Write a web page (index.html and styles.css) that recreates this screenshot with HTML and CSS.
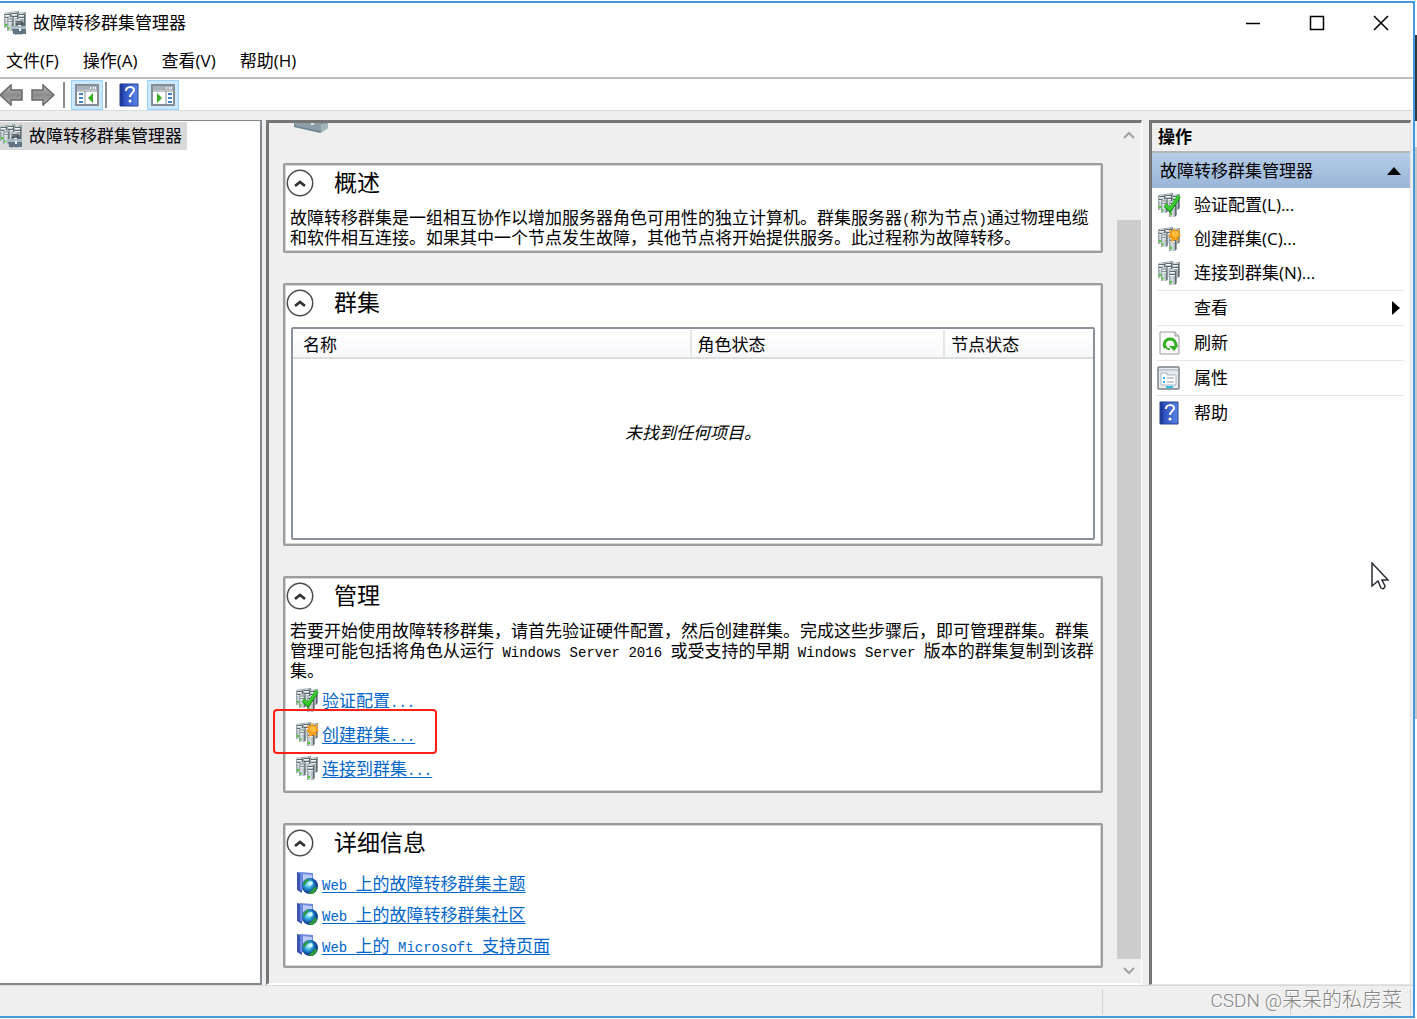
FILE: index.html
```html
<!DOCTYPE html>
<html lang="zh-CN">
<head>
<meta charset="utf-8">
<title>故障转移群集管理器</title>
<link rel="stylesheet" href="styles.css">
</head>
<body>
<svg class="defs" aria-hidden="true">
  <defs>
    <linearGradient id="steel"><stop offset="0" stop-color="#8a979d"/><stop offset=".35" stop-color="#dbe2e5"/><stop offset="1" stop-color="#87949a"/></linearGradient>
    <linearGradient id="book"><stop offset="0" stop-color="#1c3a9c"/><stop offset=".2" stop-color="#2c50c0"/><stop offset="1" stop-color="#5b84e6"/></linearGradient>
    <linearGradient id="metal" x2="0" y2="1"><stop offset="0" stop-color="#bdbdbd"/><stop offset=".5" stop-color="#8a8a8a"/><stop offset="1" stop-color="#b5b5b5"/></linearGradient>
    <radialGradient id="earth" cx=".4" cy=".4"><stop offset="0" stop-color="#b8f4ff"/><stop offset=".5" stop-color="#2aa2d8"/><stop offset="1" stop-color="#0c3d94"/></radialGradient>
  </defs>
  <symbol id="tower" viewBox="0 0 8 16">
    <path d="M0 2 2 0h6v14l-2 2H0z" fill="url(#steel)"/>
    <path d="M6.500 2v13" stroke="#5d696f" fill="none"/>
    <path d="M1 2.500h5M1 5.500h5" stroke="#59666c" fill="none"/>
    <path d="M1 3.500h5M1 6.500h5" stroke="#f4f7f8" fill="none"/>
    <path d="M1 12h2v2H1z" fill="#45cc25"/>
  </symbol>
  <symbol id="servers" viewBox="0 0 24 24">
    <use href="#tower" x="1" y="1" width="8" height="16"/>
    <use href="#tower" x="8" y="0" width="8" height="16"/>
    <use href="#tower" x="15" y="1" width="8" height="16"/>
    <use href="#tower" x="4" y="6" width="7" height="14"/>
    <use href="#tower" x="12" y="8" width="8" height="16"/>
  </symbol>
  <symbol id="verify" viewBox="0 0 24 24">
    <use href="#servers"/><path d="m8 12 5 5L22 3" fill="none" stroke="#168817" stroke-width="4"/><path d="m8 12 5 4L22 3" fill="none" stroke="#3acb2c" stroke-width="3"/>
  </symbol>
  <symbol id="create" viewBox="0 0 24 24">
    <use href="#servers"/><path d="m12 3 3 1 2-3 2 3 4-2-1 4 2 3-3 1 1 4-4-1-4 2v-4l-3-2 2-2z" fill="#f5a01c"/><circle cx="18" cy="7" r="3" fill="#ffbe3b"/>
  </symbol>
  <symbol id="manager" viewBox="0 0 24 24">
    <use href="#servers"/><path d="M14 15v-3h6v3" fill="none" stroke="#46535a" stroke-width="1.500"/><path d="M9 15h14v8H10z" fill="#607580"/><path d="M9 15h14v3H9z" fill="#a9bbc3"/><path d="M16 17h2v3h-2z" fill="#eef3f5"/>
  </symbol>
  <symbol id="help" viewBox="0 0 20 24">
    <path d="M1 1h18v22H1z" fill="url(#book)" stroke="#243f91"/><path d="M3 1v22" stroke="#17307e"/>
    <path d="M7 8c0-5 8-5 8-1 0 3-4 3-4 7" fill="none" stroke="#fff" stroke-width="2"/><circle cx="11" cy="18" r="1.5" fill="#fff"/>
  </symbol>
  <symbol id="web" viewBox="0 0 24 24">
    <path d="m2 1 5 1v20l-5-3z" fill="#3a55b4"/><path d="m5 1 13 1v18L5 19z" fill="#6d88dc"/><path d="m8 3 9 1v6H8z" fill="#b9caf6"/>
    <circle cx="15" cy="15" r="8" fill="url(#earth)"/><path d="m8 12 4-4 2 1-3 3-2 3zM16 20l5-5 1 3-4 5-5-1z" fill="#2d9b32"/><path d="m13 11 4-1 1 3-3 2z" fill="#d2fbff"/>
  </symbol>
  <symbol id="console" viewBox="0 0 24 22">
    <path d="M1 1h22v20H1z" fill="#fff" stroke="#858d96" stroke-width="2"/><path d="M2 2h20v4H2z" fill="#a9b2bb"/><path d="M2 7h20" stroke="#858d96" stroke-width="1"/><path d="M15 4h1m2 0h1m1 0h1" stroke="#fff" stroke-width="2"/>
  </symbol>
  <symbol id="collapse" viewBox="0 0 28 28">
    <circle cx="14" cy="14" r="12.7" fill="#fff" stroke="#4c4c4c" stroke-width="1.5"/><path d="m9 17 5-4 5 4" fill="none" stroke="#333" stroke-width="2.8"/>
  </symbol>
</svg>

<div class="desktop">
  <div class="window">
    <header class="titlebar">
      <svg class="icon"><use href="#manager"/></svg>
      <h1>故障转移群集管理器</h1>
      <div class="caption">
        <button aria-label="最小化"><svg viewBox="0 0 16 16"><path d="M1 8.500h14"/></svg></button>
        <button aria-label="最大化"><svg viewBox="0 0 16 16"><path d="M1.500 1.500h13v13h-13z"/></svg></button>
        <button aria-label="关闭"><svg viewBox="0 0 16 16"><path d="m1 1 14 14M15 1 1 15"/></svg></button>
      </div>
    </header>
    <nav class="menubar">
      <button>文件(F)</button><button>操作(A)</button><button>查看(V)</button><button>帮助(H)</button>
    </nav>
    <div class="toolbar">
      <button class="tool arrow" aria-label="后退"><svg viewBox="0 0 24 22"><path d="M1 11 12 1v5h11v10H12v5z" fill="url(#metal)" stroke="#686868" stroke-width="1.500"/></svg></button>
      <button class="tool arrow" aria-label="前进"><svg viewBox="0 0 24 22"><path d="M23 11 12 1v5H1v10h11v5z" fill="url(#metal)" stroke="#686868" stroke-width="1.500"/></svg></button>
      <span class="divider"></span>
      <button class="tool pressed" aria-label="显示控制台树"><svg viewBox="0 0 24 22"><use href="#console"/><path d="M10 7v14" stroke="#858d96"/><path d="M4 10h4M4 14h4M4 18h4" stroke="#4382c4" stroke-width="2"/><path d="m18 9-5 5 5 5z" fill="#35ad22"/></svg></button>
      <span class="divider"></span>
      <button class="tool" aria-label="帮助"><svg class="book"><use href="#help"/></svg></button>
      <button class="tool pressed" aria-label="显示操作窗格"><svg viewBox="0 0 24 22"><use href="#console"/><path d="M15 7v14" stroke="#858d96"/><path d="M17 10h4M17 14h4M17 18h4" stroke="#4382c4" stroke-width="2"/><path d="m6 9 5 5-5 5z" fill="#35ad22"/></svg></button>
    </div>

    <div class="panes">
      <aside class="tree">
        <button class="node"><svg class="icon"><use href="#manager"/></svg>故障转移群集管理器</button>
      </aside>

      <main class="centre">
        <div class="content">
          <svg class="banner" viewBox="0 0 34 10"><path d="M0 0h34v5l-8 5L0 4z" fill="#708690"/><path d="M0 0h27v8L2 3z" fill="#8d9ea6"/><path d="m27 1 7-1v5l-7 5z" fill="#a5b5bc"/><path d="M17 0h3v2h-3z" fill="#dce4e8"/></svg>

          <section class="card">
            <div class="head"><button aria-label="折叠"><svg><use href="#collapse"/></svg></button><h2>概述</h2></div>
            <p>故障转移群集是一组相互协作以增加服务器角色可用性的独立计算机。群集服务器<span class="half">(</span>称为节点<span class="half">)</span>通过物理电缆和软件相互连接。如果其中一个节点发生故障，其他节点将开始提供服务。此过程称为故障转移。</p>
          </section>

          <section class="card">
            <div class="head"><button aria-label="折叠"><svg><use href="#collapse"/></svg></button><h2>群集</h2></div>
            <div class="list">
              <table>
                <thead><tr><th class="name">名称</th><th class="role">角色状态</th><th>节点状态</th></tr></thead>
                <tbody><tr><td colspan="3">未找到任何项目。</td></tr></tbody>
              </table>
            </div>
          </section>

          <section class="card">
            <div class="head"><button aria-label="折叠"><svg><use href="#collapse"/></svg></button><h2>管理</h2></div>
            <p>若要开始使用故障转移群集，请首先验证硬件配置，然后创建群集。完成这些步骤后，即可管理群集。群集管理可能包括将角色从运行<span class="half"> Windows Server 2016 </span>或受支持的早期<span class="half"> Windows Server </span>版本的群集复制到该群集。</p>
            <ul class="links tasks">
              <li><svg class="icon"><use href="#verify"/></svg><a href="#verify">验证配置<span class="half">...</span></a></li>
              <li class="marked"><svg class="icon"><use href="#create"/></svg><a href="#create">创建群集<span class="half">...</span></a></li>
              <li><svg class="icon"><use href="#servers"/></svg><a href="#servers">连接到群集<span class="half">...</span></a></li>
            </ul>
          </section>

          <section class="card">
            <div class="head"><button aria-label="折叠"><svg><use href="#collapse"/></svg></button><h2>详细信息</h2></div>
            <ul class="links">
              <li><svg class="icon"><use href="#web"/></svg><a href="#web"><span class="half">Web </span>上的故障转移群集主题</a></li>
              <li><svg class="icon"><use href="#web"/></svg><a href="#web"><span class="half">Web </span>上的故障转移群集社区</a></li>
              <li><svg class="icon"><use href="#web"/></svg><a href="#web"><span class="half">Web </span>上的<span class="half"> Microsoft </span>支持页面</a></li>
            </ul>
          </section>
        </div>
        <div class="scrollbar">
          <button aria-label="向上滚动"><svg viewBox="0 0 12 8"><path d="m1 7 5-5 5 5"/></svg></button>
          <div class="track"><div class="thumb"></div></div>
          <button aria-label="向下滚动"><svg viewBox="0 0 12 8"><path d="m1 1 5 5 5-5"/></svg></button>
        </div>
      </main>

      <aside class="actions">
        <h2>操作</h2>
        <button class="group">故障转移群集管理器<svg viewBox="0 0 14 8"><path d="M0 8 7 0l7 8z"/></svg></button>
        <ul>
          <li><button><svg class="icon"><use href="#verify"/></svg>验证配置(L)...</button></li>
          <li><button><svg class="icon"><use href="#create"/></svg>创建群集(C)...</button></li>
          <li><button><svg class="icon"><use href="#servers"/></svg>连接到群集(N)...</button></li>
          <li class="ruled"><button><span class="icon"></span>查看<svg class="more" viewBox="0 0 8 14"><path d="m0 0 8 7-8 7z"/></svg></button></li>
          <li class="ruled"><button><svg class="icon" viewBox="0 0 24 24"><path d="M3 1h15l4 4v18H3z" fill="#fafafa" stroke="#999"/><path d="M18 1v4h4" fill="#ddd" stroke="#999"/><path d="M8 17c-4-9 9-13 11-4v3" fill="none" stroke="#36ad25" stroke-width="3"/><path d="M12 15h9l-4 5z" fill="#36ad25"/><path d="M8 14c1 4 3 4 5 4" fill="none" stroke="#36ad25" stroke-width="2"/></svg>刷新</button></li>
          <li class="ruled"><button><svg class="icon" viewBox="0 0 24 24"><rect x="1" y="1" width="21" height="22" rx="1" fill="#e8ebed" stroke="#7b8288" stroke-width="1.500"/><path d="M2 4h19" stroke="#a9afb4"/><path d="M4 7h6v2h9v10H4z" fill="#fff" stroke="#a9b5c3"/><path d="M6 12h2M6 16h2" stroke="#23b6df" stroke-width="2"/><path d="M10 12h7M10 16h7" stroke="#8e9ba9"/><path d="M9 20h7v2H9z" fill="#32c0e6"/></svg>属性</button></li>
          <li class="ruled"><button><svg class="icon"><use href="#help"/></svg>帮助</button></li>
        </ul>
      </aside>
    </div>

    <footer class="statusbar"><span class="cell wide"></span><span class="cell middle"></span><span class="cell small"></span></footer>
  </div>
  <div class="backdrop"></div>
  <svg class="cursor" viewBox="0 0 18 28"><path d="M1 1v23l6-5 3 7q3 2 4-2l-3-6h6z" fill="#fff" stroke="#2b2b35" stroke-width="1.500"/></svg>
  <div class="watermark"><span>CSDN @</span>呆呆的私房菜</div>
</div>
</body>
</html>
```
FILE: styles.css
```css
*, *::after { box-sizing: border-box; }
body {
  margin: 0;
  background: #fff;
  color: #000;
  font: 17px/20px "Open Sans", "Noto Sans CJK SC", sans-serif;
}
button { border: 0; padding: 0; background: none; color: inherit; font: inherit; }
h1, h2, p, ul { margin: 0; padding: 0; font-weight: 400; }
h1 { font-size: 17px; }
ul { list-style: none; }
svg { display: block; flex: none; }
.defs { position: absolute; width: 0; height: 0; }
.icon { width: 24px; height: 24px; flex: none; }

.desktop {
  position: relative;
  display: grid;
  grid-template-columns: 1fr 2px;
  min-height: 100vh;
  padding: 1px 0 1px;
}
.window {
  display: flex;
  flex-direction: column;
  min-width: 0;
  border: 2px solid #4499dc;
  border-left: 0;
  background: #efefef;
}
.backdrop {
  background: linear-gradient(#fff 34px, #303840 34px, #303840 120px, #eee 120px, #eee 146px, #c6c6c6 146px, #c6c6c6 718px, #fff 718px);
}

.titlebar { display: flex; align-items: center; height: 40px; padding-left: 3px; gap: 6px; background: #fff; }
.caption { display: flex; margin-left: auto; }
.caption button { display: flex; justify-content: center; width: 64px; padding: 12px 0; }
.caption svg { width: 16px; height: 16px; fill: none; stroke: #000; stroke-width: 1.5; }
.menubar { display: flex; gap: 24px; height: 36px; padding: 2px 6px 0; background: #fff; border-bottom: 2px solid #b9bcbc; }
.toolbar { display: flex; align-items: center; height: 32px; padding-top: 1px; background: #fff; border-bottom: 1px solid #d9d9d9; }
.tool { display: flex; align-items: center; justify-content: center; width: 32px; height: 30px; }
.tool svg { width: 24px; height: 22px; }
.tool svg.book { width: 20px; height: 24px; }
.tool.arrow { justify-content: flex-start; }
.arrow:first-child { width: 32px; margin-left: -1px; }
.pressed { background: #cce8ff; border: 1px solid #99d1ff; }
.divider { width: 2px; height: 26px; margin: 0 6px 0 2px; background: #8c8c8c; }
.arrow + .divider { margin-left: 0; }
.divider + .tool:not(.pressed) { margin: 0 2px 0 0; }

.panes { flex: 1; display: grid; grid-template-columns: 262px minmax(0, 1fr) 262px; padding: 9px 2px 0 0; }
.tree { background: #fff; border: solid #828790; border-width: 1px 2px 2px 0; padding-top: 1px; }
.node { display: flex; align-items: center; gap: 6px; height: 28px; padding-right: 5px; background: #d9d9d9; }
.node .icon { margin-left: -1px; }
.centre {
  display: flex;
  margin: 0 7px 0 4px;
  border: solid #767676;
  border-width: 3px 1px 2px 3px;
  border-right-color: #fff;
  border-bottom-color: #fff;
  font-family: "Noto Sans CJK SC", sans-serif;
}
.content { flex: 1; display: flex; flex-direction: column; gap: 30px; min-width: 0; padding: 0 14px; }
.banner { width: 34px; height: 10px; margin-left: 11px; }
.card { padding: 0 5px 4px; background: #fff; border: 2px solid #9c9c9c; border-radius: 2px; box-shadow: inset 0 0 0 1px #d5d5d5; }
.head { display: flex; align-items: center; gap: 20px; height: 36px; margin: 0 0 6px -4px; }
.head svg { width: 28px; height: 28px; }
.head h2 { padding-bottom: 4px; font-size: 23px; line-height: 32px; }
.half { font-family: "Liberation Mono", monospace; font-size: 14px; line-height: 12px; }
.list { height: 213px; margin: 0 1px; padding: 1px 0 0; border: 2px solid #8b919b; border-radius: 2px; }
table { width: 100%; height: 100%; border-collapse: collapse; table-layout: fixed; }
th { height: 28px; padding: 0 0 0 6px; border-bottom: 2px solid #dcdddd; border-right: 2px solid #e4e5e5; text-align: left; font-weight: 400; background: linear-gradient(#fff, #f7f8fa); }
th:last-child { border-right: 0; }
.name { width: 49.7%; padding-left: 10px; }
.role { width: 31.7%; }
td { padding: 0 0 34px; text-align: center; font-style: italic; }
.links { padding-bottom: 2px; }
.links li { display: flex; align-items: center; gap: 3px; height: 31px; padding-left: 5px; }
.tasks { padding-top: 3px; }
.tasks li { height: 34px; }
.links a { color: #0066cc; text-underline-offset: 2px; }
.marked { position: relative; }
.marked::after { content: ""; position: absolute; left: -17px; top: -8px; width: 164px; height: 45px; border: 2px solid #ff2015; border-radius: 4px; }

.scrollbar { display: flex; flex-direction: column; width: 24px; }
.scrollbar button { display: flex; align-items: center; justify-content: center; height: 24px; }
.scrollbar svg { width: 12px; height: 8px; fill: none; stroke: #a3a3a3; stroke-width: 2; }
.track { flex: 1; display: flex; align-items: flex-end; }
.thumb { width: 100%; height: 91%; background: #cdcdcd; }

.actions { background: #fff; border: solid #767676; border-width: 3px 1px 1px 3px; border-right-color: #e3e3e3; border-bottom-color: #e3e3e3; }
.actions h2 { height: 30px; padding: 4px 6px; border-bottom: 2px solid #b5b5b5; background: #efefef; font-size: 17px; font-weight: 700; }
.group { display: flex; align-items: center; justify-content: space-between; width: 100%; height: 35px; padding: 0 9px 0 8px; background: linear-gradient(#b5cde7, #9ab5d7); }
.group svg { width: 14px; height: 8px; }
.actions ul { padding: 0 6px 0 5px; }
.actions li button { display: flex; align-items: center; gap: 13px; width: 100%; height: 34px; }
.actions .ruled { border-top: 1px solid #e8e8e8; }
.actions .more { width: 8px; height: 14px; margin: 0 4px 0 auto; }

.statusbar { display: flex; justify-content: flex-end; height: 31px; padding: 3px 2px 1px 0; border-top: 1px solid #d9d9d9; }
.cell { border-right: 1px solid #d2d2d2; }
.wide { flex: 1; }
.middle { width: 188px; }
.small { width: 120px; }
.cursor { position: absolute; right: 28px; top: 562px; width: 18px; height: 28px; }
.watermark { position: absolute; right: 15px; bottom: 6px; color: #858585; font: 300 20px/24px "Noto Sans CJK SC", sans-serif; text-shadow: 1px 1px #fff; }
.watermark span { font-family: Roboto, sans-serif; font-size: 19px; }
```
